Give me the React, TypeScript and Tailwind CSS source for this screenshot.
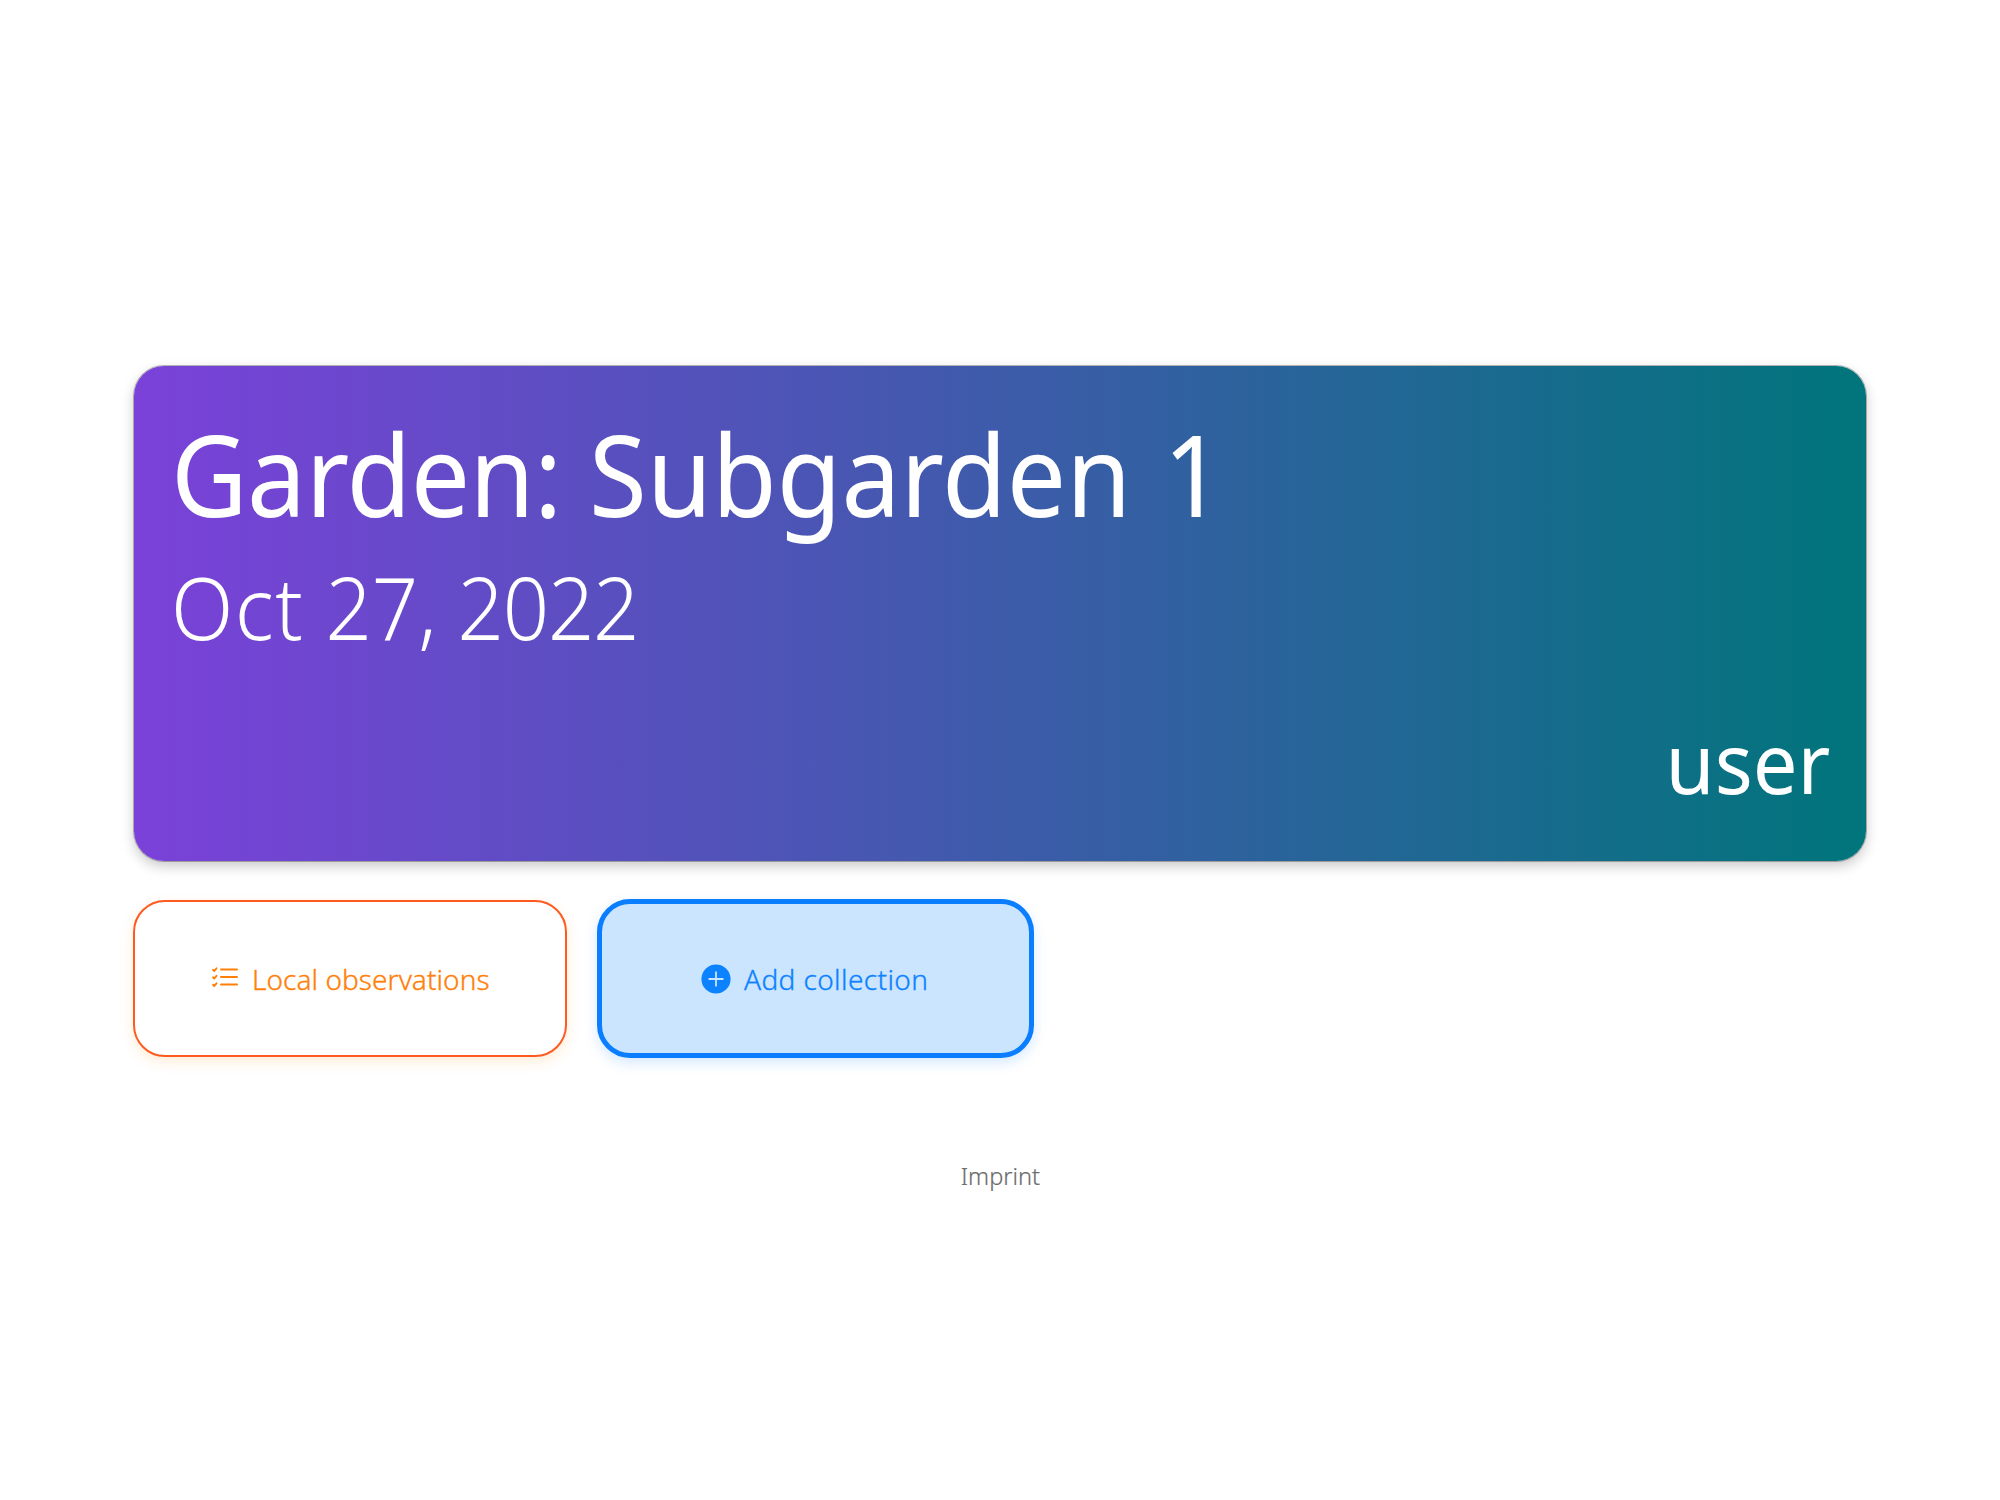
function ChecklistIcon() {
  return (
    <svg viewBox="0 0 28 22" className="-mt-[3px] -ml-px h-[22px] w-7" fill="none" stroke="currentColor" strokeLinecap="round" strokeLinejoin="round">
      <path d="M10 3.5h16M10 11h16M10 18.5h16" strokeWidth="2" />
      <path d="M2 3.8l1.3 1.2L5.5 2.3M2 11.3l1.3 1.2L5.5 9.8M2 18.8L3.3 20l2.2-2.7" strokeWidth="1.9" />
    </svg>
  );
}

function PlusCircleIcon() {
  return (
    <svg viewBox="0 0 30 30" className="-ml-px h-[30px] w-[30px]" fill="none">
      <circle cx="15" cy="15" r="14.6" fill="#0d82ff" />
      <path d="M15 8.2v13.6M8.2 15h13.6" stroke="#cce5ff" strokeWidth="1.8" strokeLinecap="round" />
    </svg>
  );
}

export default function App() {
  return (
    <div className="h-[1500px] w-full overflow-hidden bg-white px-[134px] pt-[366px] font-['Noto_Sans',sans-serif]">
      <header className="flex h-[495px] flex-col rounded-[30px] bg-[linear-gradient(90deg,#7b41d9,#00757b)] px-9 pt-[45px] whitespace-nowrap text-white shadow-[0_0_0_1px_rgba(0,0,0,0.27),0_5px_13px_rgba(0,0,0,0.22)]">
        <h1 className="ml-px origin-left scale-x-[0.932] self-start text-[113px] leading-[124px] font-normal">
          <span className="tracking-[-0.6px]">Garden:</span> Subgarden <span className="ml-[5px]">1</span>
        </h1>
        <p className="mt-4 ml-px origin-left scale-x-[0.933] self-start text-[87px] leading-[110px] font-light">
          <span className="tracking-[1.7px]">Oct</span> 27, <span className="tracking-[-1.3px]">2022</span>
        </p>
        <p className="mt-[51px] origin-right scale-x-[0.945] self-end text-[84px] leading-[100px]">user</p>
      </header>

      <div className="mt-[38px] -ml-px flex h-[159px] items-center gap-[30px] whitespace-nowrap">
        <button className="flex h-[157px] w-[434px] items-center rounded-[32px] border-2 border-[#ff5a1f] bg-white pl-[77px] text-[28px] font-light text-[#ff8008] shadow-[0_5px_13px_rgba(255,150,20,0.17)] [-webkit-text-stroke:0.35px_currentColor]">
          <ChecklistIcon />
          <span className="ml-[13px] tracking-[0.06px]">Local observations</span>
        </button>
        <button className="flex h-[159px] w-[437px] items-center rounded-[33px] border-5 border-[#0a7eff] bg-[#cce5ff] pl-[100px] text-[28px] font-light text-[#0d82ff] shadow-[0_5px_13px_rgba(10,126,255,0.17)] [-webkit-text-stroke:0.35px_currentColor]">
          <PlusCircleIcon />
          <span className="ml-[13px] tracking-[0.4px]">Add collection</span>
        </button>
      </div>

      <footer className="mt-[102px] text-center text-[24px] leading-8 font-light text-[#6c6c6c] [-webkit-text-stroke:0.2px_currentColor]">
        <a className="inline-block scale-x-[0.98]">Imprint</a>
      </footer>
    </div>
  );
}
